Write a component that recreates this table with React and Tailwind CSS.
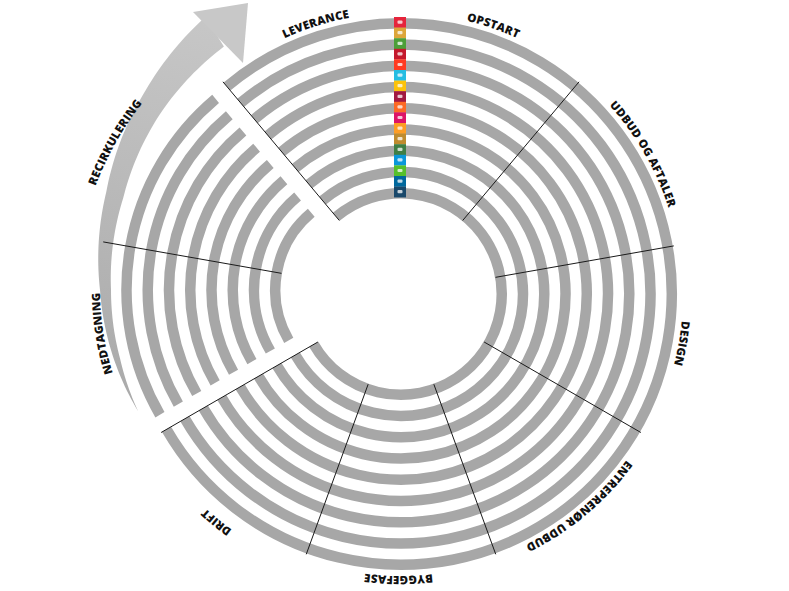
import React from 'react';

const CX = 401;
const CY = 294;
const LX = 376; // venstre (udtrukne) sektor
const LY = 290;
const RING = '#a7a7a7';
const BAND = 10.5;
const ringR = (k) => 100.75 + 21.25 * k;

const SDG = [
  '#e5243b', '#dda63a', '#4c9f38', '#c5192d', '#ff3a21', '#26bde2', '#fcc30b', '#a21942', '#fd6925',
  '#dd1367', '#fd9d24', '#bf8b2e', '#3f7e44', '#0a97d9', '#56c02b', '#00689d', '#19486a',
];

const rad = (d) => (d * Math.PI) / 180;
const pt = (cx, cy, r, d) => [cx + r * Math.cos(rad(d)), cy + r * Math.sin(rad(d))];
const f = (n) => n.toFixed(2);

function arc(cx, cy, r, a0, a1) {
  const [x0, y0] = pt(cx, cy, r, a0);
  const [x1, y1] = pt(cx, cy, r, a1);
  const large = a1 - a0 > 180 ? 1 : 0;
  return `M${f(x0)} ${f(y0)} A${r} ${r} 0 ${large} 1 ${f(x1)} ${f(y1)}`;
}

function lerp(table, d) {
  for (let i = 0; i < table.length - 1; i += 1) {
    const [a0, v0] = table[i];
    const [a1, v1] = table[i + 1];
    if (d >= a0 && d <= a1) return v0 + ((v1 - v0) * (d - a0)) / (a1 - a0);
  }
  return table[table.length - 1][1];
}

// pilens krop: indre/ydre radius langs vinklen
const INNER = [[153, 267], [165, 265], [180, 265], [200, 269], [220, 279], [238, 287]];
const OUTER = [[153, 267], [165, 271], [180, 276], [200, 287], [220, 304], [238, 322]];

function arrowBody() {
  const outer = [];
  const inner = [];
  for (let d = 153; d <= 238; d += 1) {
    outer.push(pt(LX, LY, lerp(OUTER, d), d));
    inner.push(pt(LX, LY, lerp(INNER, d), d));
  }
  const all = [...outer, ...inner.reverse()];
  return 'M' + all.map(([x, y]) => `${f(x)} ${f(y)}`).join(' L') + ' Z';
}

const LABELS = [
  { t: 'LEVERANCE', a: 252.5, r: 281 },
  { t: 'OPSTART', a: 289, r: 281 },
  { t: 'UDBUD OG AFTALER', a: 330, r: 281 },
  { t: 'DESIGN', a: 10, r: 282 },
  { t: 'ENTREPRENØR UDBUD', a: 50, r: 280 },
  { t: 'BYGGEFASE', a: 90.5, r: 282 },
  { t: 'DRIFT', a: 129, r: 290 },
  { t: 'NEDTAGNING', a: 171, r: 276, left: true },
  { t: 'RECIRKULERING', a: 209.5, r: 299, left: true },
];

const MAIN_LINES = [230, 310, 350, 30, 70, 110, 150];

function SdgCell({ i, color }) {
  const y = 17 + i * 10.6;
  return (
    <g>
      <rect x={394} y={y} width={12} height={10.8} fill={color} />
      <rect x={397.5} y={y + 3.5} width={5} height={3.2} rx={1} fill="#ffffff" opacity={0.75} />
    </g>
  );
}

function Wheel() {
  return (
    <svg width="789" height="591" viewBox="0 0 789 591" className="block">
      <defs>
        <linearGradient id="pil" gradientUnits="userSpaceOnUse" x1="140" y1="420" x2="245" y2="10">
          <stop offset="0" stopColor="#a9a9a9" />
          <stop offset="1" stopColor="#c8c8c8" />
        </linearGradient>
        {LABELS.map((l, i) => {
          const cx = l.left ? LX : CX;
          const cy = l.left ? LY : CY;
          return <path key={i} id={`lbl${i}`} d={arc(cx, cy, l.r, l.a - 70, l.a + 70)} fill="none" />;
        })}
      </defs>

      {/* hovedcirkel */}
      {Array.from({ length: 9 }, (_, k) => (
        <path key={k} d={arc(CX, CY, ringR(k), 230, 510)} fill="none" stroke={RING} strokeWidth={BAND} />
      ))}

      {/* udtrukket sektor: nedtagning + recirkulering */}
      {Array.from({ length: 8 }, (_, k) => (
        <path key={k} d={arc(LX, LY, ringR(k), 150, 230)} fill="none" stroke={RING} strokeWidth={BAND} />
      ))}

      {/* recirkuleringspil */}
      <path d={arrowBody()} fill="url(#pil)" />
      <polygon points="193,12 248,3 243,63" fill="#c8c8c8" />

      {MAIN_LINES.map((d) => {
        const [x0, y0] = pt(CX, CY, 96, d);
        const [x1, y1] = pt(CX, CY, 277, d);
        return <line key={d} x1={x0} y1={y0} x2={x1} y2={y1} stroke="#1a1a1a" strokeWidth={1} />;
      })}
      {(() => {
        const [x0, y0] = pt(LX, LY, 96, 190);
        const [x1, y1] = pt(LX, LY, 277, 190);
        return <line x1={x0} y1={y0} x2={x1} y2={y1} stroke="#1a1a1a" strokeWidth={1} />;
      })()}

      {SDG.map((c, i) => (
        <SdgCell key={i} i={i} color={c} />
      ))}

      {LABELS.map((l, i) => (
        <text
          key={i}
          fontFamily="'Open Sans', Lato, sans-serif"
          fontWeight="800"
          fontSize="11.5"
          letterSpacing="0.2"
          fill="#111111"
        >
          <textPath href={`#lbl${i}`} startOffset="50%" textAnchor="middle">
            {l.t}
          </textPath>
        </text>
      ))}
    </svg>
  );
}

export default function App() {
  return (
    <div className="h-[591px] w-[789px] overflow-hidden bg-white">
      <Wheel />
    </div>
  );
}
